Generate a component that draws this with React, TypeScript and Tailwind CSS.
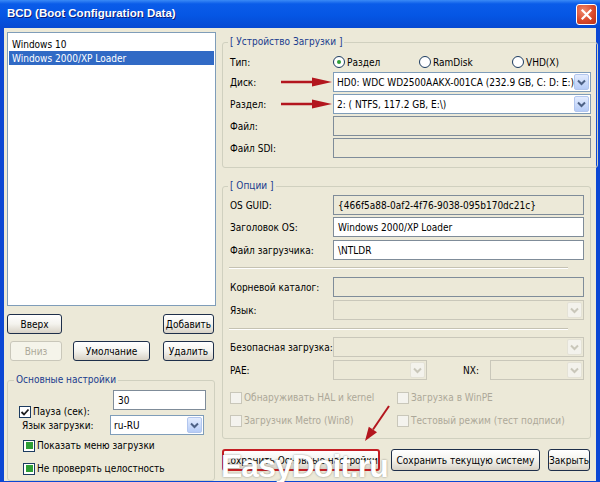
import type { ReactNode } from 'react';

function Chevron({ disabled }: { disabled?: boolean }) {
  return (
    <svg width="9" height="7" viewBox="0 0 9 7">
      <path
        d="M1 1.5 L4.5 5 L8 1.5"
        fill="none"
        stroke={disabled ? '#C9C7BA' : '#4D6185'}
        strokeWidth="2"
      />
    </svg>
  );
}

function Combo({ value = '', disabled, className = '' }: { value?: string; disabled?: boolean; className?: string }) {
  return (
    <div
      className={`h-[20px] flex items-center border ${
        disabled ? 'border-[#C9C7BA] bg-[#ECE9D8]' : 'border-[#7F9DB9] bg-white'
      } ${className}`}
    >
      <span className="flex-1 pl-[3px] overflow-hidden whitespace-nowrap">{value}</span>
      <span
        className={`w-[15px] h-[16px] mr-[1px] shrink-0 flex items-center justify-center rounded-[2px] border ${
          disabled
            ? 'border-[#E4E2D6] bg-[#F3F2EC]'
            : 'border-[#B2C6EE] bg-linear-to-b from-[#E3ECFE] to-[#B6CCF7]'
        }`}
      >
        <Chevron disabled={disabled} />
      </span>
    </div>
  );
}

function Field({ value = '', white, className = '' }: { value?: string; white?: boolean; className?: string }) {
  return (
    <div
      className={`h-[20px] flex items-center border border-[#7F8C99] pl-[4px] overflow-hidden whitespace-nowrap ${
        white ? 'bg-white' : 'bg-[#ECE9D8]'
      } ${className}`}
    >
      {value}
    </div>
  );
}

function Check({ state = 'off', disabled }: { state?: 'off' | 'checked' | 'mixed'; disabled?: boolean }) {
  return (
    <span
      className={`w-[12px] h-[12px] shrink-0 border flex items-center justify-center ${
        disabled ? 'border-[#C9C7BA] bg-[#F4F3EE]' : 'border-[#1C3B60] bg-white'
      }`}
    >
      {state === 'checked' && (
        <svg width="10" height="10" viewBox="0 0 10 10">
          <path d="M1.5 5 L4 7.5 L8.5 2.5" fill="none" stroke="#1E1E1E" strokeWidth="1.8" />
        </svg>
      )}
      {state === 'mixed' && <span className="w-[7px] h-[7px] bg-[#2E9E36]" />}
    </span>
  );
}

function Radio({ checked }: { checked?: boolean }) {
  return (
    <span className="w-[12px] h-[12px] shrink-0 rounded-full border border-[#1C3B60] bg-white flex items-center justify-center">
      {checked && <span className="w-[4px] h-[4px] rounded-full bg-[#2E9E36]" />}
    </span>
  );
}

function Btn({
  children,
  className = '',
  disabled,
  highlight,
}: {
  children: ReactNode;
  className?: string;
  disabled?: boolean;
  highlight?: boolean;
}) {
  const tone = disabled
    ? 'border border-[#C9C7BA] text-[#ACA899] bg-[#F5F4EA]'
    : highlight
    ? 'border-2 border-[#C41E24] bg-linear-to-b from-white via-[#F4F3EE] to-[#D8D2C6]'
    : 'border border-[#1E2F4A] bg-linear-to-b from-white via-[#F4F3EE] to-[#D8D2C6]';
  return (
    <div className={`shrink-0 flex items-center justify-center rounded-[3px] whitespace-nowrap ${tone} ${className}`}>
      {children}
    </div>
  );
}

function Row({ label, children, className = '' }: { label: string; children: ReactNode; className?: string }) {
  return (
    <div className={`flex items-center h-[20px] pr-[6px] ${className}`}>
      <span className="w-[110px] shrink-0 pl-[7px] whitespace-nowrap">{label}</span>
      {children}
    </div>
  );
}

function Separator({ className = '' }: { className?: string }) {
  return <div className={`ml-[6px] mr-[22px] h-[2px] border-t border-[#C5C2B2] border-b border-b-white ${className}`} />;
}

export default function App() {
  return (
    <div className="relative w-[600px] h-[482px] overflow-hidden bg-[#0B47D4] flex flex-col font-['DejaVu_Sans_Condensed','Liberation_Sans',Arial,sans-serif] text-[10px] text-black">
      {/* Title bar */}
      <div className="h-[28px] shrink-0 flex items-center pl-[7px] pr-[3px] bg-[linear-gradient(180deg,#3A8AF6_0%,#0A5CE9_14%,#0556E4_55%,#0649D2_100%)]">
        <span className="text-white font-bold text-[11.5px] font-['Liberation_Sans',Arial,sans-serif] [text-shadow:1px_1px_#0B1C7A]">
          BCD (Boot Configuration Data)
        </span>
        <div className="ml-auto w-[21px] h-[21px] rounded-[3px] border border-white bg-[radial-gradient(circle_at_35%_30%,#F08A6E,#D9492B_55%,#B8311A)] flex items-center justify-center">
          <svg width="11" height="11" viewBox="0 0 11 11">
            <path d="M1.5 1.5 L9.5 9.5 M9.5 1.5 L1.5 9.5" stroke="white" strokeWidth="2.2" strokeLinecap="square" />
          </svg>
        </div>
      </div>

      {/* Client */}
      <div className="flex-1 mx-[4px] mb-[4px] bg-[#ECE9D8] flex gap-[6px] pl-[3px] pt-[4px]">
        {/* Left column */}
        <div className="w-[209px] shrink-0 flex flex-col">
          <div className="h-[274px] border border-[#7F9DB9] bg-white p-[1px] pt-[4px]">
            <div className="h-[14px] flex items-center px-[3px]">Windows 10</div>
            <div className="h-[14px] flex items-center px-[3px] bg-[#316AC5] text-white">Windows 2000/XP Loader</div>
          </div>

          <div className="mt-[8px] flex justify-between">
            <Btn className="w-[55px] h-[20px]">Вверх</Btn>
            <Btn className="w-[51px] h-[20px] mr-[2px]">Добавить</Btn>
          </div>
          <div className="mt-[7px] flex">
            <Btn disabled className="w-[52px] h-[20px] ml-[3px]">Вниз</Btn>
            <Btn className="w-[77px] h-[20px] ml-[11px]">Умолчание</Btn>
            <Btn className="w-[51px] h-[20px] ml-[13px]">Удалить</Btn>
          </div>

          <fieldset className="mt-[13px] border border-[#D0D0BF] rounded-[3px] pb-[4px] mr-[1px]">
            <legend className="ml-[6px] px-[2px] leading-[12px] text-[#1A3C8E]">Основные настройки</legend>
            <div className="flex items-start h-[25px] mt-[4px]">
              <div className="ml-[11px] w-[94px] mt-[14px] flex items-center gap-[2px]">
                <Check state="checked" />
                <span>Пауза (сек):</span>
              </div>
              <Field white value="30" className="w-[93px]" />
            </div>
            <div className="flex items-center h-[20px]">
              <span className="ml-[14px] w-[88px] whitespace-nowrap">Язык загрузки:</span>
              <Combo value="ru-RU" className="w-[94px]" />
            </div>
            <div className="mt-[3px] ml-[15px] flex items-center gap-[2px]">
              <Check state="mixed" />
              <span>Показать меню загрузки</span>
            </div>
            <div className="mt-[8px] ml-[15px] flex items-center gap-[2px]">
              <Check state="mixed" />
              <span>Не проверять целостность</span>
            </div>
          </fieldset>
        </div>

        {/* Right column */}
        <div className="w-[369px] shrink-0 flex flex-col">
          <fieldset className="mt-[4px] border border-[#D0D0BF] rounded-[3px] pb-[9px]">
            <legend className="ml-[5px] px-[2px] leading-[12px] text-[#1A3C8E]">[ Устройство Загрузки ]</legend>
            <div className="mt-[7px] h-[14px] flex items-center">
              <span className="w-[110px] shrink-0 pl-[7px]">Тип:</span>
              <div className="w-[86px] flex items-center gap-[2px]">
                <Radio checked />
                <span>Раздел</span>
              </div>
              <div className="w-[93px] flex items-center gap-[2px]">
                <Radio />
                <span>RamDisk</span>
              </div>
              <div className="flex items-center gap-[2px]">
                <Radio />
                <span>VHD(X)</span>
              </div>
            </div>
            <Row label="Диск:" className="mt-[3px]">
              <Combo value="HD0: WDC WD2500AAKX-001CA (232.9 GB, C: D: E:)" className="flex-1 min-w-0" />
            </Row>
            <Row label="Раздел:" className="mt-[2px]">
              <Combo value="2: ( NTFS, 117.2 GB, E:\)" className="flex-1 min-w-0" />
            </Row>
            <Row label="Файл:" className="mt-[2px]">
              <Field className="flex-1" />
            </Row>
            <Row label="Файл SDI:" className="mt-[2px]">
              <Field className="flex-1" />
            </Row>
          </fieldset>

          <fieldset className="mt-[12px] border border-[#D0D0BF] rounded-[3px] pb-[10px]">
            <legend className="ml-[5px] px-[2px] leading-[12px] text-[#1A3C8E]">[ Опции ]</legend>
            <Row label="OS GUID:" className="mt-[3px]">
              <Field value="{466f5a88-0af2-4f76-9038-095b170dc21c}" className="flex-1" />
            </Row>
            <Row label="Заголовок OS:" className="mt-[2px]">
              <Field white value="Windows 2000/XP Loader" className="flex-1" />
            </Row>
            <Row label="Файл загрузчика:" className="mt-[3px]">
              <Field white value="\NTLDR" className="flex-1" />
            </Row>
            <Separator className="mt-[7px]" />
            <Row label="Корневой каталог:" className="mt-[8px]">
              <Field className="flex-1" />
            </Row>
            <Row label="Язык:" className="mt-[3px]">
              <Combo disabled className="flex-1" />
            </Row>
            <Separator className="mt-[8px]" />
            <Row label="Безопасная загрузка:" className="mt-[7px]">
              <Combo disabled className="flex-1" />
            </Row>
            <Row label="PAE:" className="mt-[3px]">
              <Combo disabled className="w-[94px]" />
              <span className="ml-[36px] w-[27px]">NX:</span>
              <Combo disabled className="flex-1" />
            </Row>
            <div className="mt-[10px] flex items-center text-[#ACA899]">
              <div className="ml-[7px] w-[167px] flex items-center gap-[2px]">
                <Check disabled />
                <span>Обнаруживать HAL и kernel</span>
              </div>
              <div className="flex items-center gap-[2px]">
                <Check disabled />
                <span>Загрузка в WinPE</span>
              </div>
            </div>
            <div className="mt-[8px] flex items-center text-[#ACA899]">
              <div className="ml-[7px] w-[167px] flex items-center gap-[2px]">
                <Check disabled />
                <span>Загрузчик Metro (Win8)</span>
              </div>
              <div className="flex items-center gap-[2px]">
                <Check disabled />
                <span>Тестовый режим (тест подписи)</span>
              </div>
            </div>
          </fieldset>

          <div className="mt-[10px] flex">
            <Btn highlight className="w-[158px] h-[22px]">Сохранить Основные настройки</Btn>
            <Btn className="w-[149px] h-[22px] ml-[11px]">Сохранить текущую систему</Btn>
            <Btn className="w-[42px] h-[22px] ml-[8px]">Закрыть</Btn>
          </div>
        </div>
      </div>

      {/* Annotation arrows */}
      <svg className="absolute inset-0 pointer-events-none" width="600" height="482" viewBox="0 0 600 482">
        <g fill="#B3161E" stroke="#B3161E">
          <line x1="281" y1="82" x2="314" y2="82" strokeWidth="2.5" />
          <polygon points="312,77.5 332,82 312,86.5" stroke="none" />
          <line x1="281" y1="104" x2="314" y2="104" strokeWidth="2.5" />
          <polygon points="312,99.5 332,104 312,108.5" stroke="none" />
          <line x1="389" y1="406" x2="373" y2="429.5" strokeWidth="2" />
          <polygon points="377,432.3 365,441 368.8,426.7" stroke="none" />
        </g>
      </svg>

      {/* Watermark */}
      <div className="absolute left-[221px] top-[450px] text-white font-bold font-['Liberation_Sans',Arial,sans-serif] text-[32px] leading-none tracking-[-1px] [text-shadow:0_0_2px_rgba(60,60,60,0.6)] pointer-events-none">
        EasyDoit.ru
      </div>
    </div>
  );
}
